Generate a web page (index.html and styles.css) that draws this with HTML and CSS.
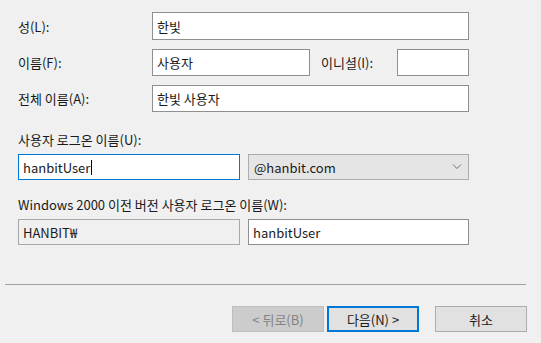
FILE: index.html
```html
<!DOCTYPE html>
<html>
  <head>
    <title>새 개체 - 사용자</title>
    <link rel="stylesheet" href="styles.css">
  </head>
  <body>
    <div class="dialog">
      <div class="fields">
        <div class="name-row first">
          <span class="label">성(L):</span>
          <div class="textbox wide">한빛</div>
        </div>
        <div class="name-row">
          <span class="label">이름(F):</span>
          <div class="textbox given">사용자</div>
          <span class="initial-label">이니셜(I):</span>
          <div class="textbox initial"></div>
        </div>
        <div class="name-row">
          <span class="label">전체 이름(A):</span>
          <div class="textbox wide">한빛 사용자</div>
        </div>

        <div class="section-label logon-label">사용자 로그온 이름(U):</div>
        <div class="logon-row">
          <div class="textbox focused">hanbitUser<span class="caret"></span></div>
          <div class="combo">
            <span>@hanbit.com</span>
            <svg width="10" height="6" viewBox="0 0 10 6">
              <path d="M1 0.5 L5 4.5 L9 0.5" fill="none" stroke="#707070" stroke-width="1"/>
            </svg>
          </div>
        </div>

        <div class="section-label">Windows 2000 이전 버전 사용자 로그온 이름(W):</div>
        <div class="logon-row">
          <div class="textbox readonly">HANBIT₩</div>
          <div class="textbox legacy">hanbitUser</div>
        </div>
      </div>

      <div class="separator"></div>

      <div class="buttons">
        <button class="btn" disabled>&lt; 뒤로(B)</button>
        <button class="btn default">다음(N) &gt;</button>
        <button class="btn cancel">취소</button>
      </div>
    </div>
  </body>
</html>
```

FILE: styles.css
```css
body {
  margin: 0;
  background-color: #f0f0f0;
  font-family: "Noto Sans CJK KR", "Noto Sans", sans-serif;
  font-size: 13px;
  color: #1a1a1a;
}
.dialog {
  height: 343px;
  box-sizing: border-box;
  border-bottom: 1px solid #a0a0a0;
}
.fields {
  padding: 0 0 0 18px;
}
.name-row {
  display: flex;
  align-items: center;
  height: 27px;
  margin-top: 9px;
}
.name-row.first {
  height: 28px;
  margin-top: 12px;
}
.label {
  width: 134px;
}
.textbox {
  box-sizing: border-box;
  height: 100%;
  display: flex;
  align-items: center;
  padding: 0 4px;
  background-color: #fff;
  border: 1px solid #8f8f8f;
  white-space: nowrap;
}
.textbox.wide {
  width: 317px;
}
.textbox.given {
  width: 158px;
}
.initial-label {
  margin-left: 11px;
  width: 76px;
}
.textbox.initial {
  width: 72px;
}
.section-label {
  height: 18px;
  line-height: 18px;
  margin-top: 16px;
  margin-bottom: 5px;
}
.section-label.logon-label {
  margin-top: 19px;
}
.logon-row {
  display: flex;
  height: 26px;
}
.textbox.focused {
  width: 222px;
  border-color: #0078d7;
}
.caret {
  display: inline-block;
  width: 1px;
  height: 15px;
  background-color: #000;
  margin-left: 1px;
}
.combo {
  box-sizing: border-box;
  width: 221px;
  margin-left: 8px;
  display: flex;
  align-items: center;
  justify-content: space-between;
  padding: 0 6px 0 5px;
  background-color: #e5e5e5;
  border: 1px solid #acacac;
}
.textbox.readonly {
  width: 222px;
  background-color: #f0f0f0;
  border-color: #a8a8a8;
}
.textbox.legacy {
  width: 221px;
  margin-left: 8px;
}
.separator {
  height: 1px;
  margin: 39px 15px 0 5px;
  background-color: #a0a0a0;
}
.buttons {
  display: flex;
  justify-content: flex-end;
  margin-top: 21px;
  padding-right: 14px;
}
.btn {
  box-sizing: border-box;
  width: 92px;
  height: 26px;
  padding: 0;
  font-family: "Noto Sans CJK KR", "Noto Sans", sans-serif;
  font-size: 13px;
  color: #1a1a1a;
  background-color: #e1e1e1;
  border: 1px solid #adadad;
  border-radius: 0;
}
.btn:disabled {
  color: #838383;
  background-color: #cccccc;
  border-color: #bfbfbf;
}
.btn.default {
  margin-left: 3px;
  border: 2px solid #0078d7;
}
.btn.cancel {
  margin-left: 16px;
}
```
